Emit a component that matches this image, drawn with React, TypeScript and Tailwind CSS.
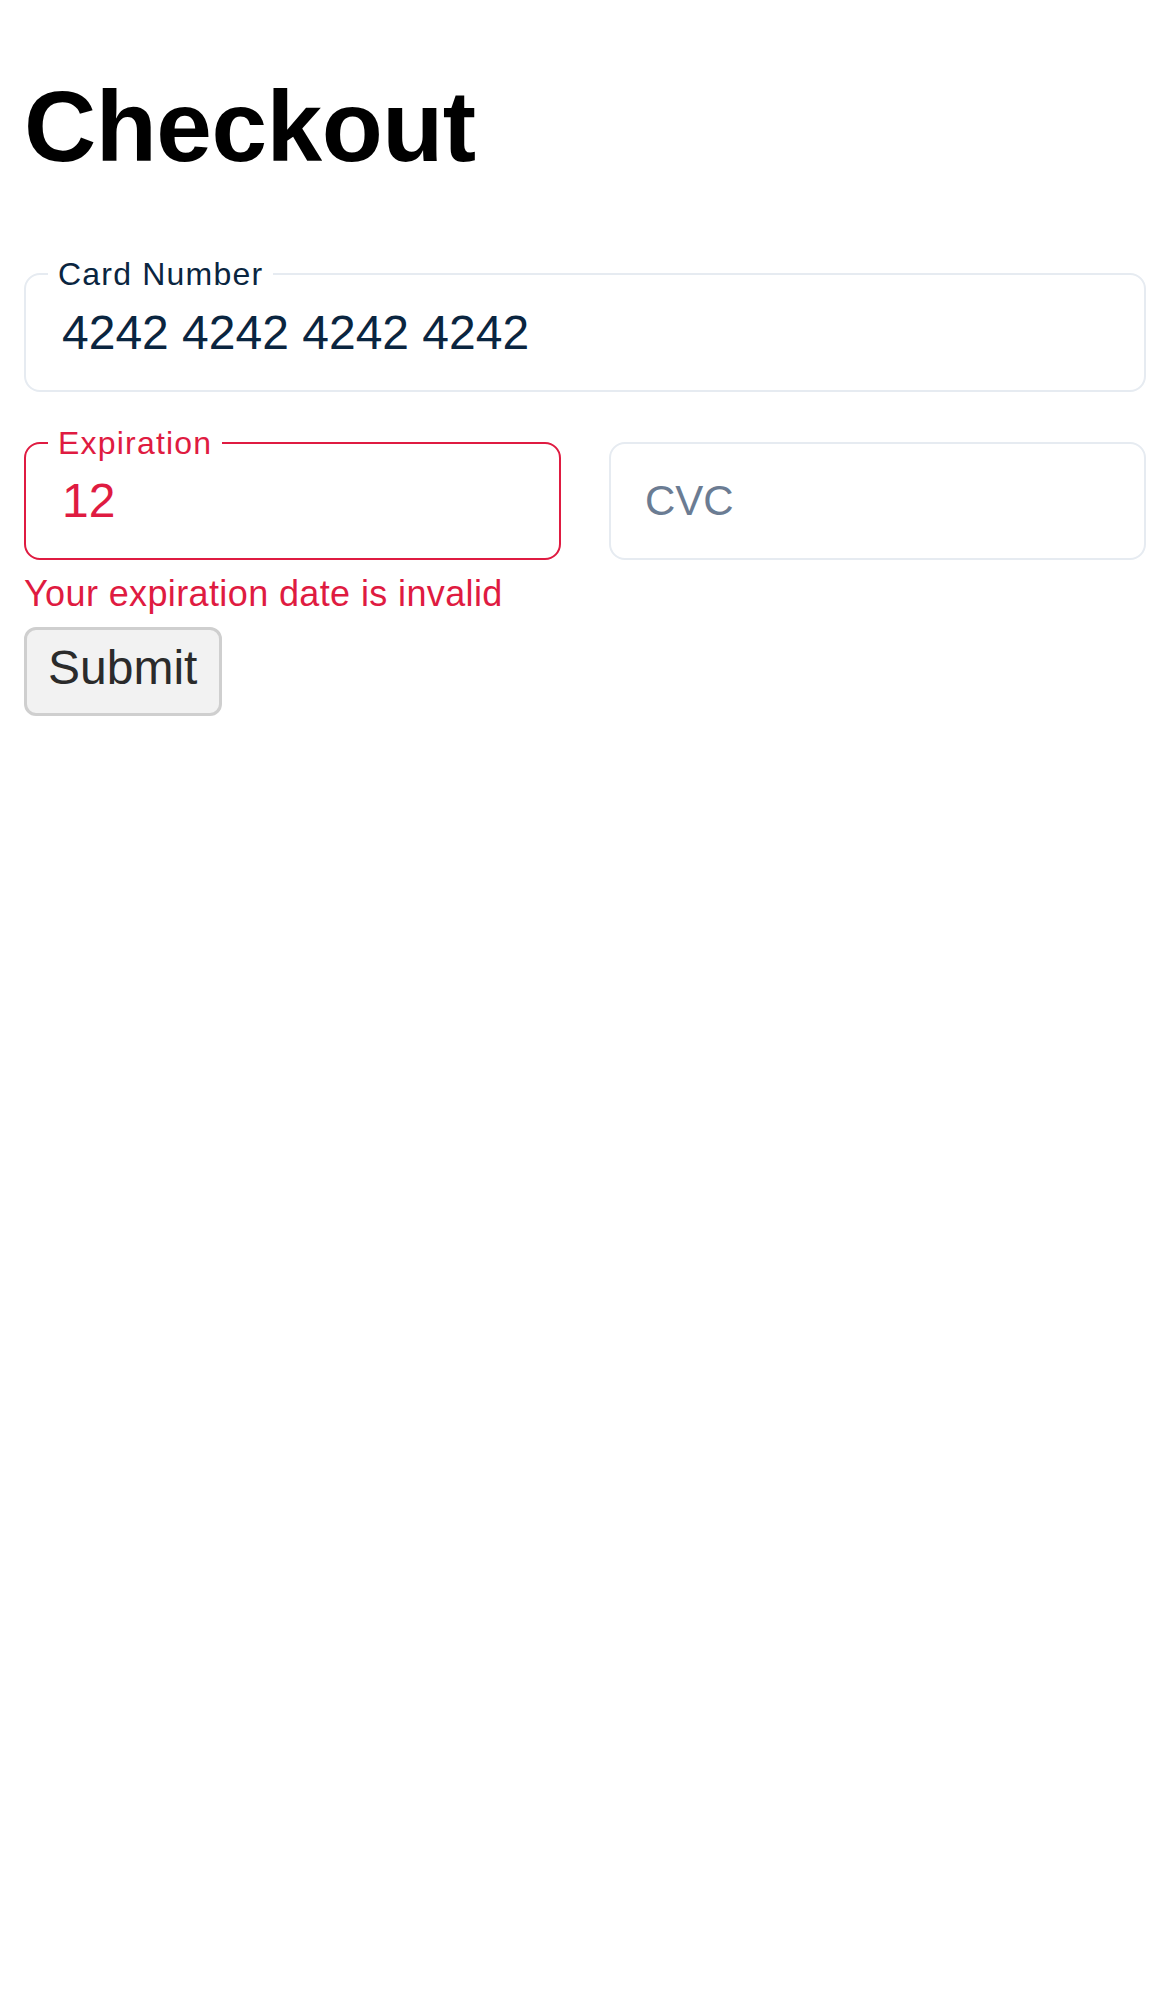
import React from "react";

export default function App() {
  return (
    <div
      className="min-h-screen bg-white px-[24px]"
      style={{ fontFamily: '"Liberation Sans", Arial, sans-serif' }}
    >
      <h1 className="pt-[66px] text-[100px] leading-[120px] font-bold tracking-[-0.5px] text-black">
        Checkout
      </h1>

      <div className="relative mt-[87px] flex h-[119px] items-center rounded-[16px] border-2 border-[#e6ebf1] pl-[36px]">
        <span className="absolute left-[22px] top-[-20px] bg-white px-[10px] text-[32px] leading-[38px] tracking-[1.2px] text-[#0a2540]">
          Card Number
        </span>
        <span className="text-[48px] leading-[56px] text-[#0a2540]">4242 4242 4242 4242</span>
      </div>

      <div className="mt-[50px] grid grid-cols-2 gap-[48px]">
        <div className="relative flex h-[118px] items-center rounded-[16px] border-2 border-[#df1b41] pl-[36px]">
          <span className="absolute left-[22px] top-[-20px] bg-white px-[10px] text-[32px] leading-[38px] tracking-[1.2px] text-[#df1b41]">
            Expiration
          </span>
          <span className="text-[48px] leading-[56px] text-[#df1b41]">12</span>
        </div>
        <div className="flex h-[118px] items-center rounded-[16px] border-2 border-[#e6ebf1] pl-[34px]">
          <span className="text-[42px] leading-[50px] text-[#6b7c93]">CVC</span>
        </div>
      </div>

      <p className="mt-[13px] text-[36px] leading-[41px] tracking-[0.38px] text-[#df1b41]">
        Your expiration date is invalid
      </p>

      <button
        type="button"
        className="mt-[13px] rounded-[12px] border-[3px] border-[#cfcfcf] bg-[#f2f2f2] pl-[21px] pr-[22px] pt-[10px] pb-[18px] text-[48px] leading-[55px] text-[#2b2b2b]"
      >
        Submit
      </button>
    </div>
  );
}
